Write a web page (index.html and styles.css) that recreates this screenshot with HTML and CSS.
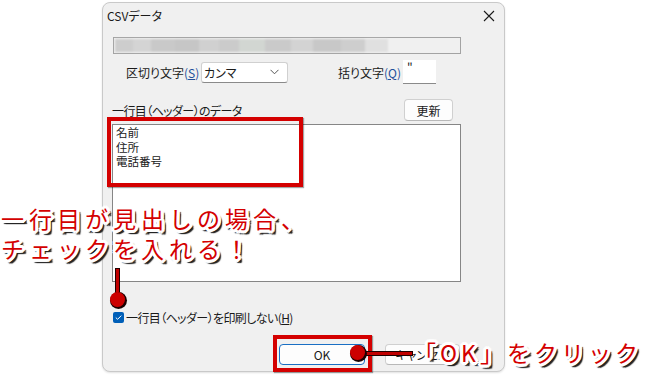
FILE: index.html
```
<!DOCTYPE html>
<html lang="ja">
<head>
<meta charset="utf-8">
<link rel="stylesheet" href="styles.css">
</head>
<body>
<div class="stage">
  <div class="dialog">
    <div class="titlebar">
      <span class="title">CSVデータ</span>
      <svg class="close" width="12" height="12" viewBox="0 0 12 12"><path d="M1 1L11 11M11 1L1 11" stroke="#1a1a1a" stroke-width="1.1" fill="none"/></svg>
    </div>
    <div class="content">
      <div class="path"><div class="blur"></div></div>
      <div class="opts">
        <span class="lbl lbl-s">区切り文字<span class="acc">(<u>S</u>)</span></span>
        <div class="select"><span>カンマ</span><svg width="9" height="6" viewBox="0 0 9 6"><path d="M0.5 0.8L4.5 4.8L8.5 0.8" stroke="#555" stroke-width="1" fill="none"/></svg></div>
        <span class="lbl lbl-q">括り文字<span class="acc">(<u>Q</u>)</span></span>
        <div class="quote">"</div>
      </div>
      <div class="hdr">
        <span class="tight">一行目（ヘッダー）のデータ</span>
        <div class="btn btn-upd">更新</div>
      </div>
      <div class="textarea">名前<br>住所<br>電話番号</div>
      <div class="chk">
        <span class="box"><svg width="11" height="11" viewBox="0 0 11 11"><path d="M2.8 5.6L4.6 7.3L8.3 3.6" stroke="#fff" stroke-width="1" fill="none"/></svg></span>
        <span class="tight">一行目（ヘッダー）を印刷しない(<u>H</u>)</span>
      </div>
      <div class="btns">
        <div class="btn btn-ok">OK</div>
        <div class="btn btn-cancel">キャンセル</div>
      </div>
    </div>
  </div>

  <div class="hl hl-data"></div>
  <div class="hl hl-ok"></div>
  <div class="pin pin-v"></div>
  <div class="dot dot-chk"></div>
  <div class="pin pin-h"></div>
  <div class="dot dot-ok"></div>
  <div class="note note-chk">一行目が見出しの場合、<br>チェックを入れる！</div>
  <div class="note note-ok">「OK」をクリック</div>
</div>
</body>
</html>
```

FILE: styles.css
```
html, body {
  margin: 0;
  padding: 0;
  background: #ffffff;
}
body {
  font-family: "Noto Sans CJK JP", "Noto Sans", sans-serif;
  font-size: 12px;
  color: #1a1a1a;
}
.stage {
  position: relative;
  width: 649px;
  height: 377px;
  overflow: hidden;
}
.dialog {
  margin: 2px 0 0 102px;
  width: 403px;
  height: 370px;
  box-sizing: border-box;
  border: 1px solid #c9c9c9;
  border-radius: 8px;
  background: #f0f0f0;
  box-shadow: 0 1px 2px rgba(0,0,0,0.12);
  font-feature-settings: "palt";
}
.titlebar {
  height: 33px;
  display: flex;
  align-items: center;
  justify-content: space-between;
  padding: 0 9px 0 4px;
  box-sizing: border-box;
  margin-top: -4px;
}
.title {
  font-size: 12px;
  line-height: 16px;
}
.close {
  display: block;
}
.content {
  padding: 0 43px 0 10px;
}
.path {
  height: 17px;
  box-sizing: border-box;
  border: 1px solid #a3a3a3;
  background: #f0f0f0;
  margin-top: 5px;
  padding: 1px;
}
.blur {
  width: 273px;
  height: 100%;
  background: linear-gradient(90deg,
    #cdcdcd 0, #cdcdcd 18px,
    #d4d4d4 18px, #d4d4d4 36px,
    #c9c9c9 36px, #c9c9c9 60px,
    #c6c6c6 60px, #c6c6c6 84px,
    #d0d0d0 84px, #d0d0d0 104px,
    #cbcbcb 104px, #cbcbcb 124px,
    #d2d6d2 124px, #d2d6d2 150px,
    #cacaca 150px, #cacaca 176px,
    #d3d3d3 176px, #d3d3d3 198px,
    #c8c8c8 198px, #c8c8c8 226px,
    #cecece 226px, #cecece 250px,
    #e0e0e0 250px, #e0e0e0 273px);
  filter: blur(1px);
}
.opts {
  display: flex;
  align-items: center;
  height: 24px;
  margin-top: 6px;
}
.lbl {
  white-space: nowrap;
}
.lbl-s {
  width: 75px;
  padding-left: 13px;
  box-sizing: content-box;
}
.acc {
  color: #1f4f9a;
}
.tight {
  letter-spacing: -0.6px;
  white-space: nowrap;
}
.select {
  width: 87px;
  height: 21px;
  box-sizing: border-box;
  background: #fff;
  border: 1px solid #d0d0d0;
  border-bottom-color: #8a8a8a;
  border-radius: 3px;
  display: flex;
  align-items: center;
  justify-content: space-between;
  padding: 0 8px 0 2px;
}
.lbl-q {
  width: 113px;
  text-align: right;
  margin-right: 2px;
}
.quote {
  width: 33px;
  height: 24px;
  box-sizing: border-box;
  background: #fff;
  border-bottom: 1px solid #8a8a8a;
  padding: 0 0 0 4px;
  line-height: 16px;
}
.hdr {
  display: flex;
  align-items: center;
  justify-content: space-between;
  margin-top: 15px;
  margin-left: -1px;
  height: 22px;
}
.btn {
  box-sizing: border-box;
  background: #fdfdfd;
  border: 1px solid #d0d0d0;
  border-bottom-color: #b8b8b8;
  border-radius: 4px;
  display: flex;
  align-items: center;
  justify-content: center;
}
.btn-upd {
  width: 49px;
  height: 22px;
  margin-right: 8px;
}
.textarea {
  margin-top: 3px;
  margin-left: -1px;
  height: 158px;
  box-sizing: border-box;
  background: #fff;
  border: 1px solid #868686;
  padding: 0 3px;
  font-size: 11.5px;
  line-height: 14.5px;
}
.chk {
  display: flex;
  align-items: center;
  height: 16px;
  margin-top: 27px;
}
.box {
  width: 11px;
  height: 11px;
  border-radius: 2px;
  background: #005fb8;
  margin-right: 2px;
  display: block;
}
.box svg {
  display: block;
}
.btns {
  display: flex;
  gap: 20px;
  margin-top: 19px;
  padding-left: 166px;
}
.btn-ok {
  width: 86px;
  height: 21px;
  border: 1.5px solid #1a6fc4;
  background: #fdfdfd;
}
.btn-cancel {
  width: 75px;
  height: 21px;
}

/* annotations */
.hl {
  position: absolute;
  box-sizing: border-box;
  border: 4px solid #d40000;
  box-shadow: 1px 1px 1px rgba(0,0,0,0.35);
}
.hl-data {
  left: 107px;
  top: 117px;
  width: 196px;
  height: 70px;
}
.hl-ok {
  left: 273px;
  top: 335px;
  width: 99px;
  height: 37px;
}
.pin {
  position: absolute;
  background: #c00000;
  box-shadow: 0 0 0 1px #200000;
}
.pin-v {
  left: 116px;
  top: 269px;
  width: 3px;
  height: 30px;
}
.pin-h {
  left: 360px;
  top: 352px;
  width: 52px;
  height: 3px;
}
.dot {
  position: absolute;
  width: 15px;
  height: 15px;
  border-radius: 50%;
  background: #cc0000;
  box-shadow: 1px 1px 0 1px #1a0000;
}
.dot-chk {
  left: 110px;
  top: 292px;
}
.dot-ok {
  left: 350px;
  top: 345px;
}
.note {
  position: absolute;
  font-family: "Noto Sans CJK JP", sans-serif;
  font-weight: 400;
  color: #d40000;
  font-size: 23px;
  letter-spacing: 5px;
  line-height: 30px;
  white-space: nowrap;
  text-shadow:
    -2px -2px 0 #fff, 0 -2px 0 #fff, 2px -2px 0 #fff, 2px 0 0 #fff,
    2px 2px 0 #fff, 0 2px 0 #fff, -2px 2px 0 #fff, -2px 0 0 #fff,
    -1px -3px 0 #fff, 1px -3px 0 #fff, 3px -1px 0 #fff, 3px 1px 0 #fff,
    1px 3px 0 #fff, -1px 3px 0 #fff, -3px 1px 0 #fff, -3px -1px 0 #fff,
    3px 3px 1px #222, 4px 4px 1px #222, 2px 4px 1px #222, 4px 2px 1px #222;
}
.note-chk {
  left: 1px;
  top: 203px;
}
.note-ok {
  left: 413px;
  top: 337px;
  letter-spacing: 4px;
}
```
